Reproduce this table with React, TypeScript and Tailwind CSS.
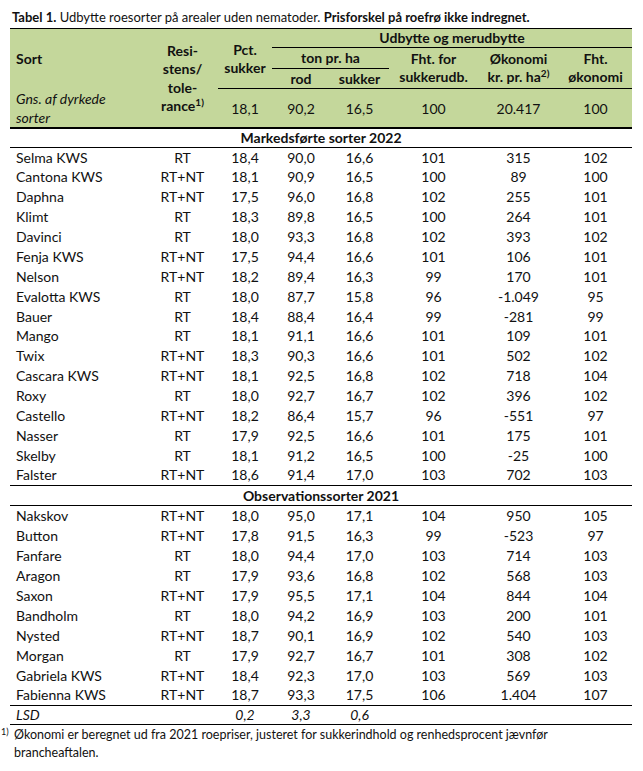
const font = { fontFamily: "Lato, 'Open Sans', sans-serif" };

type Row = [string, string, string, string, string, string, string, string];

const markedsforte: Row[] = [
  ["Selma KWS", "RT", "18,4", "90,0", "16,6", "101", "315", "102"],
  ["Cantona KWS", "RT+NT", "18,1", "90,9", "16,5", "100", "89", "100"],
  ["Daphna", "RT+NT", "17,5", "96,0", "16,8", "102", "255", "101"],
  ["Klimt", "RT", "18,3", "89,8", "16,5", "100", "264", "101"],
  ["Davinci", "RT", "18,0", "93,3", "16,8", "102", "393", "102"],
  ["Fenja KWS", "RT+NT", "17,5", "94,4", "16,6", "101", "106", "101"],
  ["Nelson", "RT+NT", "18,2", "89,4", "16,3", "99", "170", "101"],
  ["Evalotta KWS", "RT", "18,0", "87,7", "15,8", "96", "-1.049", "95"],
  ["Bauer", "RT", "18,4", "88,4", "16,4", "99", "-281", "99"],
  ["Mango", "RT", "18,1", "91,1", "16,6", "101", "109", "101"],
  ["Twix", "RT+NT", "18,3", "90,3", "16,6", "101", "502", "102"],
  ["Cascara KWS", "RT+NT", "18,1", "92,5", "16,8", "102", "718", "104"],
  ["Roxy", "RT", "18,0", "92,7", "16,7", "102", "396", "102"],
  ["Castello", "RT+NT", "18,2", "86,4", "15,7", "96", "-551", "97"],
  ["Nasser", "RT", "17,9", "92,5", "16,6", "101", "175", "101"],
  ["Skelby", "RT", "18,1", "91,2", "16,5", "100", "-25", "100"],
  ["Falster", "RT+NT", "18,6", "91,4", "17,0", "103", "702", "103"],
];

const observation: Row[] = [
  ["Nakskov", "RT+NT", "18,0", "95,0", "17,1", "104", "950", "105"],
  ["Button", "RT+NT", "17,8", "91,5", "16,3", "99", "-523", "97"],
  ["Fanfare", "RT", "18,0", "94,4", "17,0", "103", "714", "103"],
  ["Aragon", "RT", "17,9", "93,6", "16,8", "102", "568", "103"],
  ["Saxon", "RT+NT", "17,9", "95,5", "17,1", "104", "844", "104"],
  ["Bandholm", "RT", "18,0", "94,2", "16,9", "103", "200", "101"],
  ["Nysted", "RT+NT", "18,7", "90,1", "16,9", "102", "540", "103"],
  ["Morgan", "RT", "17,9", "92,7", "16,7", "101", "308", "102"],
  ["Gabriela KWS", "RT+NT", "18,4", "92,3", "17,0", "103", "569", "103"],
  ["Fabienna KWS", "RT+NT", "18,7", "93,3", "17,5", "106", "1.404", "107"],
];

function DataRow({ r, h }: { r: Row; h: string }) {
  return (
    <tr className={h}>
      <td className="pl-[6px] text-left">{r[0]}</td>
      {r.slice(1).map((v, i) => (
        <td key={i} className="text-center">
          {v}
        </td>
      ))}
    </tr>
  );
}

export default function App() {
  return (
    <div className="w-[643px] h-[771px] bg-white text-[#111] pt-[9px]" style={font}>
      <div className="pl-[12px] text-[13px] leading-[16px] mb-[3px]">
        <span className="font-bold">Tabel 1.</span> Udbytte roesorter på arealer uden nematoder.{" "}
        <span className="font-bold">Prisforskel på roefrø ikke indregnet.</span>
      </div>

      <table className="ml-[10px] w-[622px] table-fixed border-collapse text-[14px] leading-[18px]">
        <colgroup>
          <col className="w-[137px]" />
          <col className="w-[71px]" />
          <col className="w-[54px]" />
          <col className="w-[58px]" />
          <col className="w-[59px]" />
          <col className="w-[89px]" />
          <col className="w-[81px]" />
          <col className="w-[73px]" />
        </colgroup>
        <thead className="bg-[#c4d79b] font-bold">
          <tr className="h-[19px] border-t border-black">
            <th rowSpan={3} className="pl-[6px] text-left font-bold">
              Sort
            </th>
            <th rowSpan={4} className="font-bold leading-[18.5px] pt-[2px]">
              Resi-
              <br />
              stens/
              <br />
              tole-
              <br />
              rance<sup className="text-[10px]">1)</sup>
            </th>
            <th rowSpan={3} className="font-bold">
              Pct.
              <br />
              sukker
            </th>
            <th colSpan={5} className="border-b border-black font-bold">
              Udbytte og merudbytte
            </th>
          </tr>
          <tr className="h-[21px]">
            <th colSpan={2} className="border-b border-black font-bold">
              ton pr. ha
            </th>
            <th rowSpan={2} className="font-bold">
              Fht. for
              <br />
              sukkerudb.
            </th>
            <th rowSpan={2} className="font-bold">
              Økonomi
              <br />
              kr. pr. ha<sup className="text-[10px]">2)</sup>
            </th>
            <th rowSpan={2} className="font-bold">
              Fht.
              <br />
              økonomi
            </th>
          </tr>
          <tr className="h-[20px]">
            <th className="font-bold">rod</th>
            <th className="font-bold">sukker</th>
          </tr>
          <tr className="h-[38px] border-b-2 border-black font-normal">
            <td className="pl-[6px] text-left italic leading-[19px]">
              Gns. af dyrkede
              <br />
              sorter
            </td>
            {["18,1", "90,2", "16,5", "100", "20.417", "100"].map((v, i) => (
              <td key={i} className="border-t border-black text-center pt-[2px]">
                {v}
              </td>
            ))}
          </tr>
        </thead>
        <tbody>
          <tr className="h-[20px] border-b border-black">
            <td colSpan={8} className="text-center font-bold">
              Markedsførte sorter 2022
            </td>
          </tr>
          {markedsforte.map((r) => (
            <DataRow key={r[0]} r={r} h="h-[19.9px]" />
          ))}
          <tr className="h-[20px] border-y border-black">
            <td colSpan={8} className="text-center font-bold">
              Observationssorter 2021
            </td>
          </tr>
          {observation.map((r) => (
            <DataRow key={r[0]} r={r} h="h-[20px]" />
          ))}
          <tr className="h-[19px] border-y border-black italic">
            <td className="pl-[6px] text-left">LSD</td>
            <td />
            <td className="text-center">0,2</td>
            <td className="text-center">3,3</td>
            <td className="text-center">0,6</td>
            <td />
            <td />
            <td />
          </tr>
        </tbody>
      </table>

      <div className="flex pl-[1px] pt-[1px] text-[12.5px] leading-[18px]">
        <sup className="text-[9px] w-[13px] shrink-0 leading-[18px] top-[-3px]">1)</sup>
        <div>
          Økonomi er beregnet ud fra 2021 roepriser, justeret for sukkerindhold og renhedsprocent jævnfør
          <br />
          brancheaftalen.
        </div>
      </div>
    </div>
  );
}
